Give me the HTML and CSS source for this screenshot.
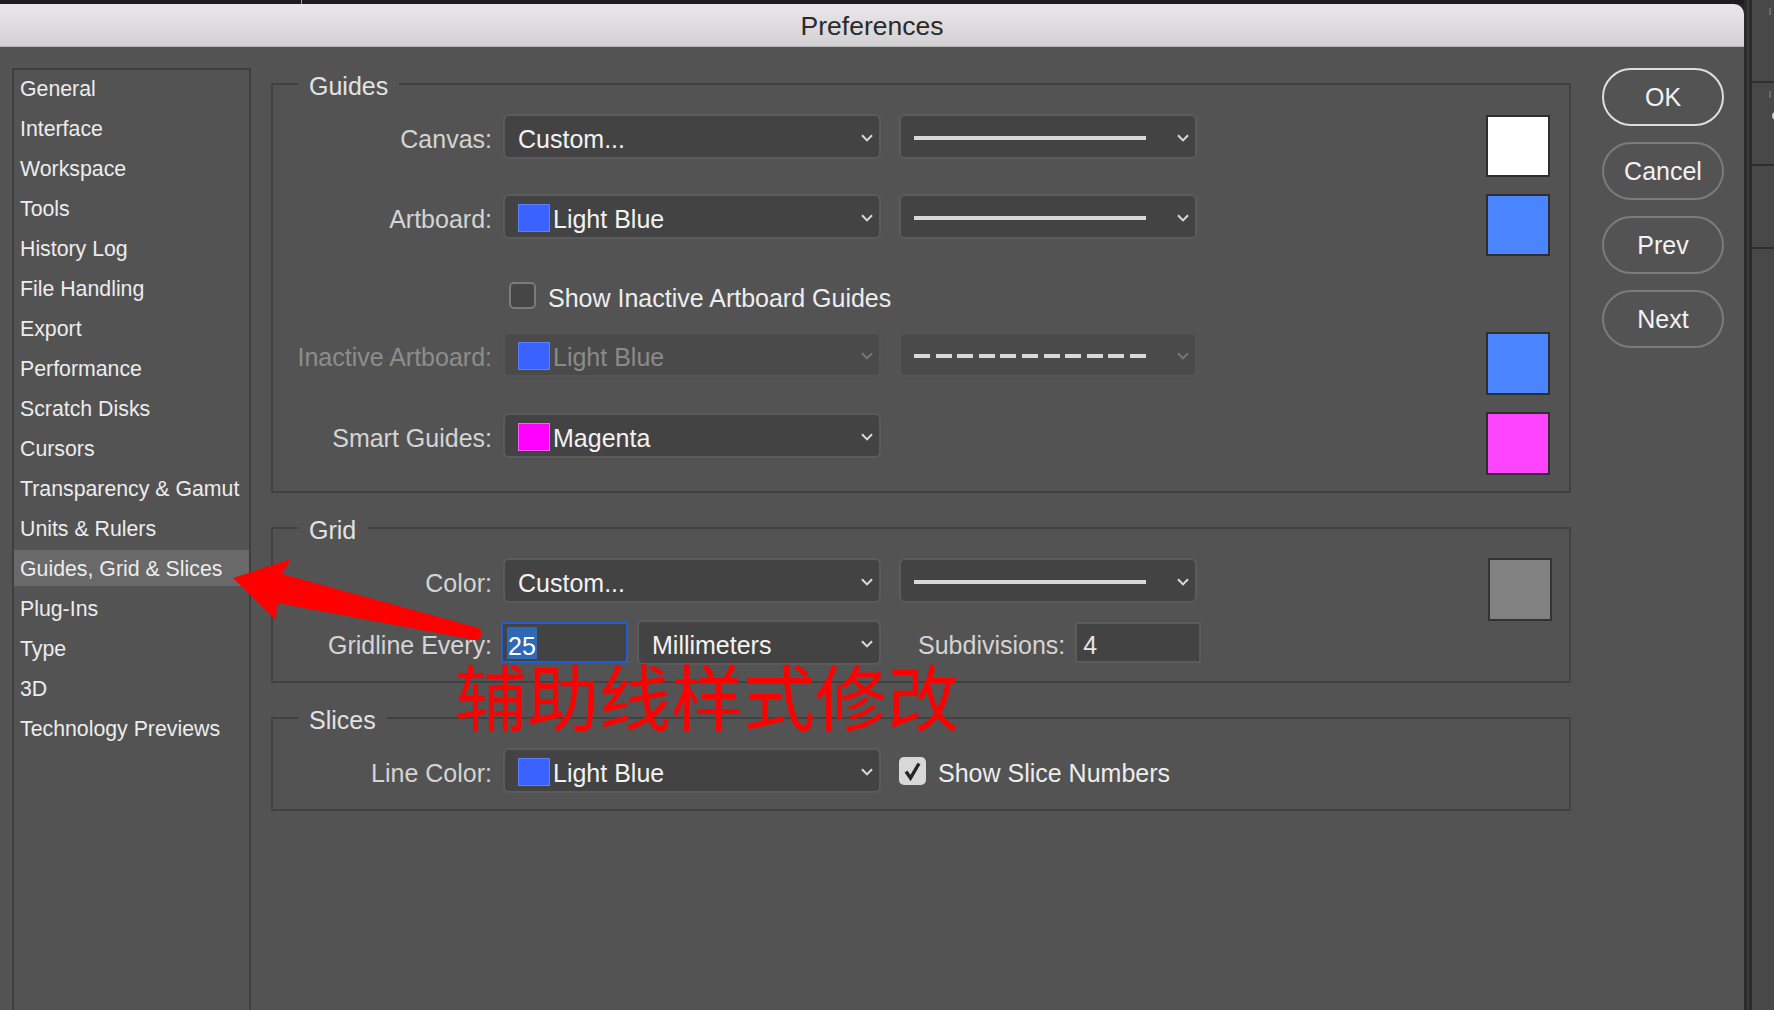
FILE: index.html
```html
<!DOCTYPE html>
<html lang="en">
<head>
<meta charset="utf-8">
<title>Preferences</title>
<link rel="stylesheet" href="styles.css">
</head>
<body>
<div class="window">
  <div class="topstrip"><span class="tick"></span></div>
  <div class="titlebar">Preferences</div>
  <div class="dialog">
    <nav class="sidebar">
      <div class="nav-item">General</div>
      <div class="nav-item">Interface</div>
      <div class="nav-item">Workspace</div>
      <div class="nav-item">Tools</div>
      <div class="nav-item">History Log</div>
      <div class="nav-item">File Handling</div>
      <div class="nav-item">Export</div>
      <div class="nav-item">Performance</div>
      <div class="nav-item">Scratch Disks</div>
      <div class="nav-item">Cursors</div>
      <div class="nav-item">Transparency &amp; Gamut</div>
      <div class="nav-item">Units &amp; Rulers</div>
      <div class="nav-item active">Guides, Grid &amp; Slices</div>
      <div class="nav-item">Plug-Ins</div>
      <div class="nav-item">Type</div>
      <div class="nav-item">3D</div>
      <div class="nav-item">Technology Previews</div>
    </nav>

    <main class="main">
      <section class="group">
        <div class="legend">Guides</div>
        <div class="group-body">
          <div class="fields">
            <div class="row r-a">
              <span class="label">Canvas:</span>
              <div class="select w1"><span class="value">Custom...</span><svg class="chev" viewBox="0 0 12 8"><path d="M1 1.2 L6 6.4 L11 1.2"/></svg></div>
              <div class="select w2"><span class="line"></span><svg class="chev" viewBox="0 0 12 8"><path d="M1 1.2 L6 6.4 L11 1.2"/></svg></div>
            </div>
            <div class="row r-b">
              <span class="label">Artboard:</span>
              <div class="select w1"><span class="chip blue"></span><span class="value">Light Blue</span><svg class="chev" viewBox="0 0 12 8"><path d="M1 1.2 L6 6.4 L11 1.2"/></svg></div>
              <div class="select w2"><span class="line"></span><svg class="chev" viewBox="0 0 12 8"><path d="M1 1.2 L6 6.4 L11 1.2"/></svg></div>
            </div>
            <div class="row row-check r-c">
              <span class="label"></span>
              <label class="check"><span class="box"></span><span class="txt">Show Inactive Artboard Guides</span></label>
            </div>
            <div class="row disabled r-d">
              <span class="label">Inactive Artboard:</span>
              <div class="select w1"><span class="chip blue"></span><span class="value">Light Blue</span><svg class="chev" viewBox="0 0 12 8"><path d="M1 1.2 L6 6.4 L11 1.2"/></svg></div>
              <div class="select w2"><span class="line dashed"></span><svg class="chev" viewBox="0 0 12 8"><path d="M1 1.2 L6 6.4 L11 1.2"/></svg></div>
            </div>
            <div class="row r-e">
              <span class="label">Smart Guides:</span>
              <div class="select w1"><span class="chip magenta"></span><span class="value">Magenta</span><svg class="chev" viewBox="0 0 12 8"><path d="M1 1.2 L6 6.4 L11 1.2"/></svg></div>
            </div>
          </div>
          <div class="swatches">
            <div class="swatch sw-white s1"></div>
            <div class="swatch sw-blue s2"></div>
            <div class="swatch sw-blue tall s3"></div>
            <div class="swatch sw-magenta tall s4"></div>
          </div>
        </div>
      </section>

      <section class="group">
        <div class="legend">Grid</div>
        <div class="group-body">
          <div class="fields">
            <div class="row g-a">
              <span class="label">Color:</span>
              <div class="select w1"><span class="value">Custom...</span><svg class="chev" viewBox="0 0 12 8"><path d="M1 1.2 L6 6.4 L11 1.2"/></svg></div>
              <div class="select w2"><span class="line"></span><svg class="chev" viewBox="0 0 12 8"><path d="M1 1.2 L6 6.4 L11 1.2"/></svg></div>
            </div>
            <div class="row g-b">
              <span class="label">Gridline Every:</span>
              <div class="pair">
                <div class="field focus"><span class="sel">25</span></div>
                <div class="select mm"><span class="value">Millimeters</span><svg class="chev" viewBox="0 0 12 8"><path d="M1 1.2 L6 6.4 L11 1.2"/></svg></div>
              </div>
              <div class="subdiv">
                <span class="label-inline">Subdivisions:</span>
                <div class="field"><span class="val">4</span></div>
              </div>
            </div>
          </div>
          <div class="swatches">
            <div class="swatch sw-gray tall sg"></div>
          </div>
        </div>
      </section>

      <section class="group">
        <div class="legend">Slices</div>
        <div class="group-body">
          <div class="fields">
            <div class="row sl-a">
              <span class="label">Line Color:</span>
              <div class="select w1"><span class="chip blue"></span><span class="value">Light Blue</span><svg class="chev" viewBox="0 0 12 8"><path d="M1 1.2 L6 6.4 L11 1.2"/></svg></div>
              <label class="check checked"><span class="box"><svg viewBox="0 0 27 28"><path d="M7 14.5 L11.5 21 L20 6.5"/></svg></span><span class="txt">Show Slice Numbers</span></label>
            </div>
          </div>
        </div>
      </section>
    </main>

    <div class="buttons">
      <div class="btn primary">OK</div>
      <div class="btn">Cancel</div>
      <div class="btn">Prev</div>
      <div class="btn">Next</div>
    </div>
  </div>
</div>

<div class="outside">
  <div class="cell"><span class="mark"></span></div>
  <div class="cell"><span class="mark"></span><span class="knob"></span></div>
  <div class="cell"></div>
</div>

<svg class="arrow" viewBox="0 0 1774 1010" width="1774" height="1010">
  <path d="M233 578 L291 559 L282 574 L475 627 A6.5 6.5 0 0 1 475 640 L277 603 L276 620 Z"/>
</svg>
<div class="annotation">辅助线样式修改</div>
</body>
</html>
```

FILE: styles.css
```css
* { box-sizing: border-box; }
html, body { margin: 0; padding: 0; }
body {
  width: 1774px;
  height: 1010px;
  overflow: hidden;
  position: relative;
  display: flex;
  background: #474747;
  font-family: "Liberation Sans", Arial, sans-serif;
}

/* window frame */
.window {
  width: 1744px;
  height: 1010px;
  display: flex;
  flex-direction: column;
  background: #262626;
}
.topstrip {
  height: 4px;
  background: #1d1d1d;
  display: flex;
}
.topstrip .tick {
  margin-left: 301px;
  width: 1px;
  background: #a0a0a0;
}
.titlebar {
  height: 43px;
  padding-top: 3px;
  background: linear-gradient(#e9e7e9, #d3d2d3);
  border-bottom: 1px solid #b6b6b6;
  border-top-right-radius: 10px;
  display: flex;
  align-items: center;
  justify-content: center;
  font-size: 26.5px;
  color: #2a2a2a;
}
.dialog {
  flex: 1;
  background: #535353;
  display: flex;
  align-items: stretch;
}

/* sidebar */
.sidebar {
  margin: 21px 0 0 12px;
  width: 239px;
  border: 2px solid #3e3e3e;
  border-bottom: none;
  display: flex;
  flex-direction: column;
  gap: 4px;
}
.nav-item {
  height: 36px;
  line-height: 33px;
  padding: 3px 0 0 6px;
  font-size: 21.3px;
  color: #ececec;
  white-space: nowrap;
}
.nav-item.active { background: #696969; }

/* main */
.main {
  margin-left: 20px;
  width: 1300px;
  padding-top: 36px;
  display: flex;
  flex-direction: column;
  gap: 34px;
}
.group {
  border: 2px solid #414141;
  padding-bottom: 16px;
}
.legend {
  width: fit-content;
  margin: -13px 0 0 25px;
  padding: 0 11px;
  height: 28px;
  line-height: 28px;
  background: #535353;
  font-size: 25px;
  color: #e2e2e2;
}
.group-body { display: flex; }
.fields {
  flex: 1;
  display: flex;
  flex-direction: column;
}
.swatches {
  width: 64px;
  margin-right: 19px;
  display: flex;
  flex-direction: column;
}

.row {
  display: flex;
  align-items: center;
  height: 45px;
  font-size: 25px;
}
.r-a { margin-top: 14px; }
.r-b { margin-top: 35px; }
.r-c { margin-top: 43px; }
.r-d { margin-top: 23px; }
.r-e { margin-top: 36px; }
.g-a { margin-top: 14px; }
.g-b { margin-top: 17px; }
.sl-a { margin-top: 14px; }
.row-check { height: 27px; }

.label {
  width: 219px;
  margin-right: 11px;
  padding-top: 6px;
  text-align: right;
  color: #d4d4d4;
  white-space: nowrap;
}
.disabled .label { color: #8d8d8d; }

/* select */
.select {
  height: 45px;
  border: 2px solid #5b5b5b;
  border-radius: 6px;
  background: #434343;
  display: flex;
  align-items: center;
  padding: 0 6px 0 13px;
  color: #f2f2f2;
}
.w1 { width: 378px; }
.w2 { width: 298px; margin-left: 18px; }
.select .value { white-space: nowrap; padding-top: 6px; }
.chev {
  width: 12px;
  height: 8px;
  margin-left: auto;
  margin-top: 2px;
  flex: none;
}
.chev path {
  fill: none;
  stroke: #dadada;
  stroke-width: 2;
}
.chip {
  width: 32px;
  height: 28px;
  margin: 2px 3px 0 0;
  flex: none;
}
.chip.blue { background: #3a62ff; border: 1px solid #5b80ff; }
.chip.magenta { background: #ff00ff; border: 1px solid #ff5cff; }
.line {
  width: 232px;
  height: 4px;
  margin-top: 2px;
  background: #d9d9d9;
}
.line.dashed {
  background: repeating-linear-gradient(90deg, #d9d9d9 0 16px, transparent 16px 21.6px);
}
.disabled .select {
  background: #4a4a4a;
  border-color: #555555;
  color: #8a8a8a;
}
.disabled .chev path { stroke: #777777; }

/* checkbox */
.check {
  display: flex;
  align-items: center;
  gap: 12px;
  margin-left: 6px;
  color: #ededed;
  white-space: nowrap;
}
.check .txt { padding-top: 5px; }
.check .box {
  width: 27px;
  height: 27px;
  border: 2px solid #7b7b7b;
  border-radius: 5px;
  background: #464646;
  flex: none;
}
.check.checked { margin-left: 18px; }
.check.checked .box {
  height: 28px;
  border: none;
  background: #d8d8d8;
  display: flex;
}
.check.checked .box svg { width: 27px; height: 28px; }
.check.checked .box path {
  fill: none;
  stroke: #262626;
  stroke-width: 3.4;
  stroke-linejoin: miter;
}

/* gridline row */
.pair {
  width: 378px;
  display: flex;
  align-items: center;
  justify-content: space-between;
}
.field {
  width: 126px;
  height: 41px;
  border: 2px solid #5b5b5b;
  background: #434343;
  display: flex;
  align-items: center;
  padding-left: 4px;
  color: #e6e6e6;
}
.field.focus {
  width: 127px;
  margin-left: -2px;
  border-color: #1f5fd6;
}
.field .sel {
  background: #2e69b5;
  color: #ffffff;
  height: 32px;
  line-height: 26px;
  padding: 6px 1px 0;
}
.field .val { padding: 6px 0 0 2px; }
.select.mm { width: 244px; }
.subdiv {
  margin-left: 18px;
  padding-left: 19px;
  display: flex;
  align-items: center;
  gap: 10px;
}
.label-inline { color: #d4d4d4; white-space: nowrap; padding-top: 6px; }

/* swatches */
.swatch {
  width: 64px;
  height: 62px;
  border: 2px solid #2e2e2e;
}
.swatch.tall { height: 63px; }
.sw-white { background: #ffffff; }
.sw-blue { background: #4a84ff; }
.sw-magenta { background: #ff44ff; }
.sw-gray { background: #818181; border-color: #333333; }
.s1 { margin-top: 15px; }
.s2 { margin-top: 17px; }
.s3 { margin-top: 76px; }
.s4 { margin-top: 17px; }
.sg { margin-top: 14px; margin-left: 2px; margin-right: -2px; }

/* buttons */
.buttons {
  margin-left: 31px;
  padding-top: 21px;
  width: 122px;
  display: flex;
  flex-direction: column;
  gap: 16px;
}
.btn {
  height: 58px;
  border: 2px solid #7b7b7b;
  border-radius: 29px;
  display: flex;
  align-items: center;
  justify-content: center;
  font-size: 25px;
  color: #f2f2f2;
}
.btn.primary { border-color: #dedede; }

/* outside neighbour panel */
.outside {
  width: 30px;
  height: 1010px;
  flex: none;
  background: linear-gradient(90deg, #2b2b2b 0 3px, #3a3a3a 3px 5px, #2b2b2b 5px 8px, #484848 8px);
  padding-left: 8px;
  display: flex;
  flex-direction: column;
}
.outside .cell {
  height: 83px;
  border-bottom: 2px solid #2f2f2f;
  display: flex;
  flex-direction: column;
}
.outside .mark {
  width: 2px;
  height: 7px;
  margin: 8px 0 0 17px;
  background: #6a6a6a;
}
.outside .knob {
  width: 8px;
  height: 8px;
  border-radius: 50%;
  margin: 14px 0 0 20px;
  background: #d0d0d0;
}

/* annotations over the screenshot */
.arrow {
  position: absolute;
  left: 0;
  top: 0;
  pointer-events: none;
}
.arrow path { fill: #ff0000; }
.annotation {
  position: absolute;
  left: 455px;
  top: 658px;
  font-family: "Noto Sans CJK SC", "Noto Sans CJK JP", sans-serif;
  font-size: 72px;
  line-height: 1;
  color: #ff0000;
  white-space: nowrap;
  pointer-events: none;
}
```
